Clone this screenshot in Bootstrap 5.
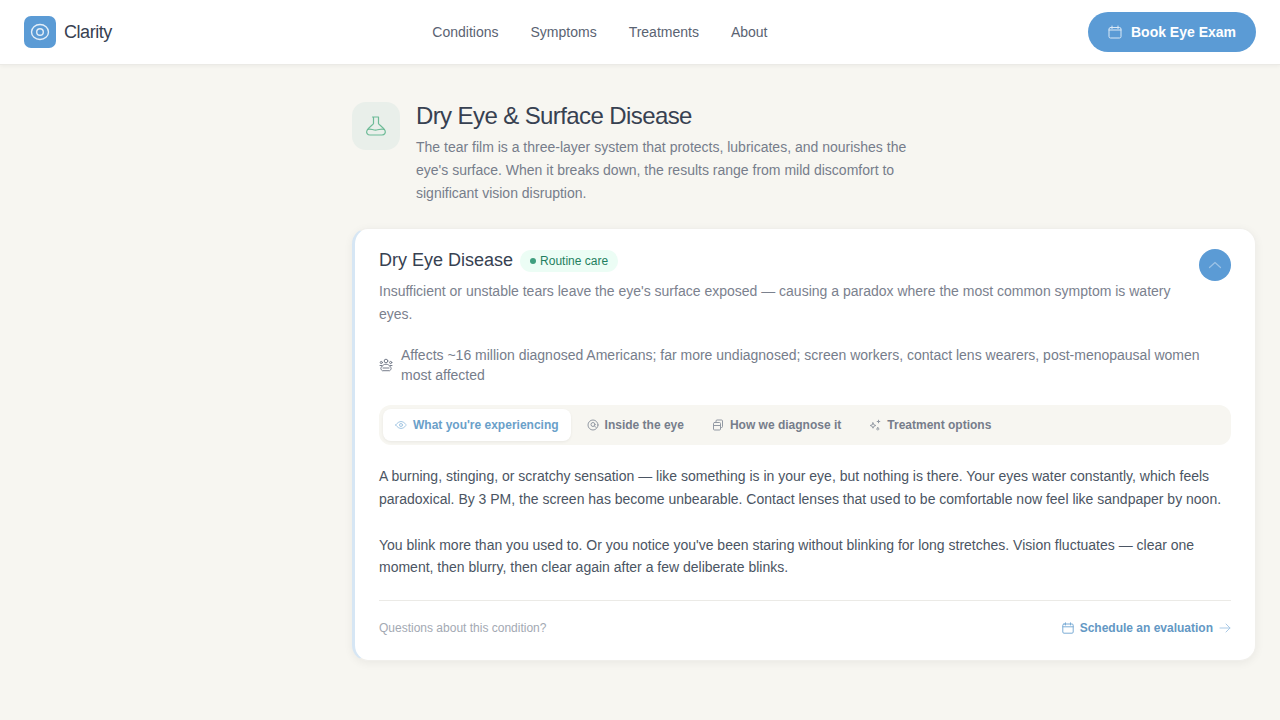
<!DOCTYPE html>
<html lang="en">
<head>
  <meta charset="UTF-8" />
  <meta name="viewport" content="width=device-width, initial-scale=1.0"/>
  <title>Clarity</title>
  <link href="https://cdn.jsdelivr.net/npm/bootstrap@5.3.0/dist/css/bootstrap.min.css" rel="stylesheet"/>
  <style>
    html, body { height: 100%; }
    body { background: #f7f6f1; font-family: "Liberation Sans", Arial, sans-serif; color: #4b5563; overflow: hidden; }
    svg { display: block; flex: none; fill: none; stroke: currentColor; stroke-linecap: round; stroke-linejoin: round; }

    .top-bar { height: 65px; background: #fff; border-bottom: 1px solid #ebeae6; box-shadow: 0 1px 4px rgba(0,0,0,.05); padding: 0 24px; }
    .logo-box { width: 32px; height: 32px; border-radius: 7px; background: #5b9bd5; color: #e3eef8; }
    .logo-name { font-size: 18px; letter-spacing: -.45px; color: #374151; }
    .main-links { gap: 32px; margin-left: 320.5px; }
    .main-links a { font-size: 14px; color: #5a6372; text-decoration: none; }
    .book-btn { width: 168px; height: 40px; border-radius: 20px; border: 0; background: #5b9bd5; color: #fff; font-size: 14px; font-weight: 700; gap: 9px; }
    .book-btn svg { color: #dbe9f6; }

    .page-col { margin-left: 352px; width: 904px; }
    .head-row { padding-top: 37px; gap: 16px; }
    .head-icon { width: 48px; height: 48px; border-radius: 14px; background: #e9efea; color: #6dbb97; }
    .head-title { font-size: 24px; line-height: 28px; font-weight: 400; letter-spacing: -.6px; color: #374151; margin: 0 0 6px; }
    .head-text { font-size: 14px; line-height: 22.75px; color: #767d8b; width: 512px; margin: 0; }

    .cond-card { margin-top: 24px; height: 432.75px; background: #fff; border-radius: 16px; border: 1px solid #f0efeb; border-left: 3px solid #d6e6f4; box-shadow: 0 2px 10px rgba(0,0,0,.06); padding: 20px 24px 0; }
    .cond-title { font-size: 18px; line-height: 22px; font-weight: 400; color: #374151; margin: 0; }
    .care-pill { height: 22px; margin: 1px 0 0 7px; padding: 0 10px; border-radius: 11px; background: #ecfdf5; color: #1f7f5f; font-size: 12px; gap: 4px; }
    .care-dot { width: 6px; height: 6px; border-radius: 50%; background: #3f9f7f; }
    .cond-sub { font-size: 14px; line-height: 22.75px; color: #7b818e; margin: 7.75px 0 0; width: 800px; }
    .toggle-btn { width: 32px; height: 32px; border-radius: 50%; background: #5b9bd5; color: #9cc3e6; border: 0; padding: 0; }
    .who-row { margin-top: 19.25px; gap: 8px; font-size: 14px; line-height: 20px; color: #767d8b; }
    .tab-strip { margin-top: 20px; height: 40px; background: #f7f6f1; border-radius: 12px; padding: 4px; gap: 4px; }
    .tab-item { height: 32px; padding: 0 12px; border-radius: 8px; font-size: 12px; font-weight: 700; color: #767d8b; gap: 6px; }
    .tab-item svg { color: #9299a3; }
    .tab-item.is-on { background: #fff; color: #6aa0c9; box-shadow: 0 1px 3px rgba(0,0,0,.06); }
    .tab-item.is-on svg { color: #a5c8e4; }
    .body-copy { font-size: 14px; line-height: 22.75px; color: #4b5563; margin: 20px 0 0; }
    .body-copy + .body-copy { margin-top: 23.25px; }
    .foot-row { margin-top: 21px; padding-top: 18px; border-top: 1px solid #ebeae6; height: 57px; }
    .foot-q { font-size: 12px; color: #a3a9b3; }
    .foot-link { font-size: 12px; font-weight: 700; color: #6398c4; text-decoration: none; gap: 6px; }
    .foot-link svg { color: #7dadd6; }
    .foot-link svg.arrow-ic { color: #a9c9e6; }
  </style>
</head>
<body>
  <header class="top-bar d-flex align-items-center">
    <div class="d-flex align-items-center gap-2">
      <div class="logo-box d-flex align-items-center justify-content-center">
        <svg width="20" height="20" viewBox="0 0 20 20" stroke-width="1.4"><ellipse cx="10" cy="10" rx="8.500" ry="7.500"/><circle cx="10" cy="10" r="3.300"/></svg>
      </div>
      <span class="logo-name">Clarity</span>
    </div>
    <nav class="main-links d-flex">
      <a href="#">Conditions</a>
      <a href="#">Symptoms</a>
      <a href="#">Treatments</a>
      <a href="#">About</a>
    </nav>
    <button class="book-btn d-flex align-items-center justify-content-center ms-auto">
      <svg width="14" height="14" viewBox="0 0 14 14" stroke-width="1"><rect x="1" y="2.500" width="12" height="10.500" rx="1.500"/><path d="M1 5h12M4 1v2.500M10 1v2.500"/></svg>
      Book Eye Exam
    </button>
  </header>

  <main class="page-col">
    <section class="head-row d-flex">
      <div class="head-icon d-flex align-items-center justify-content-center">
        <svg width="24" height="24" viewBox="0 0 24 24" stroke-width="1.200"><path d="M8.500 3h6M9.500 3v6.500c0 1-4.500 3.500-6.500 7-1.200 2.200.5 4.500 3 4.500h12c2.500 0 4-2.300 3-4.500-2-3.500-6.500-6-6.500-7V3"/><path d="M3.500 15.500c3-1.500 5.500 1 9 .5s5-1.500 8-.5"/></svg>
      </div>
      <div>
        <h1 class="head-title">Dry Eye &amp; Surface Disease</h1>
        <p class="head-text">The tear film is a three-layer system that protects, lubricates, and nourishes the eye's surface. When it breaks down, the results range from mild discomfort to significant vision disruption.</p>
      </div>
    </section>

    <section class="cond-card">
      <div class="d-flex justify-content-between align-items-start">
        <div>
          <div class="d-flex align-items-start">
            <h2 class="cond-title">Dry Eye Disease</h2>
            <span class="care-pill d-inline-flex align-items-center"><span class="care-dot"></span>Routine care</span>
          </div>
          <p class="cond-sub">Insufficient or unstable tears leave the eye's surface exposed — causing a paradox where the most common symptom is watery eyes.</p>
        </div>
        <button class="toggle-btn d-flex align-items-center justify-content-center">
          <svg width="14" height="14" viewBox="0 0 14 14" stroke-width="1.200"><path d="M1.500 9.500 7 4.500l5.500 5"/></svg>
        </button>
      </div>

      <div class="who-row d-flex align-items-center">
        <svg width="14" height="14" viewBox="0 0 14 14" stroke-width="1"><circle cx="7" cy="3" r="1.800"/><circle cx="2.300" cy="4.500" r="1.100"/><circle cx="11.700" cy="4.500" r="1.100"/><path d="M3 12.500c-1.500-1-1.500-2.500-.5-3.500 1-1.500 2.500-2.800 4.500-2.800s3.500 1.300 4.500 2.800c1 1 1 2.500-.5 3.500z"/><path d="M1 7.500h2M11 7.500h2M4 10h6"/></svg>
        <span>Affects ~16 million diagnosed Americans; far more undiagnosed; screen workers, contact lens wearers, post-menopausal women most affected</span>
      </div>

      <div class="tab-strip d-flex">
        <div class="tab-item is-on d-flex align-items-center">
          <svg width="12" height="12" viewBox="0 0 12 12"><path d="M.8 6S2.800 2.500 6 2.500 11.200 6 11.200 6 9.200 9.500 6 9.500.8 6 .8 6z"/><circle cx="6" cy="6" r="1.500"/></svg>
          What you're experiencing
        </div>
        <div class="tab-item d-flex align-items-center">
          <svg width="12" height="12" viewBox="0 0 12 12"><circle cx="6" cy="6" r="5"/><circle cx="6" cy="5.500" r="2"/><path d="M7.500 7 9 8.500"/></svg>
          Inside the eye
        </div>
        <div class="tab-item d-flex align-items-center">
          <svg width="12" height="12" viewBox="0 0 12 12"><rect x="1.500" y="3.500" width="7" height="7.500" rx="1"/><path d="M4 3.500V2a1 1 0 0 1 1-1h4.500a1 1 0 0 1 1 1v5.500a1 1 0 0 1-1 1H8.500M1.500 6.500h7"/></svg>
          How we diagnose it
        </div>
        <div class="tab-item d-flex align-items-center">
          <svg width="12" height="12" viewBox="0 0 12 12"><path d="M4 3.800 4.800 5.700 6.800 6.500 4.800 7.300 4 9.200 3.200 7.300 1.200 6.500 3.200 5.700z"/><path d="M9.500 1.200v2.600M8.200 2.500h2.600M8.800 8.800a1.100 1.100 0 1 0 .01 0z"/></svg>
          Treatment options
        </div>
      </div>

      <p class="body-copy">A burning, stinging, or scratchy sensation — like something is in your eye, but nothing is there. Your eyes water constantly, which feels paradoxical. By 3 PM, the screen has become unbearable. Contact lenses that used to be comfortable now feel like sandpaper by noon.</p>
      <p class="body-copy">You blink more than you used to. Or you notice you've been staring without blinking for long stretches. Vision fluctuates — clear one moment, then blurry, then clear again after a few deliberate blinks.</p>

      <div class="foot-row d-flex justify-content-between align-items-start">
        <span class="foot-q">Questions about this condition?</span>
        <a class="foot-link d-flex align-items-center" href="#">
          <svg width="12" height="12" viewBox="0 0 12 12"><rect x=".8" y="2" width="10.400" height="9.200" rx="1.200"/><path d="M.8 4.800h10.400M3.500 .8V3M8.500 .8V3"/></svg>
          Schedule an evaluation
          <svg class="arrow-ic" width="12" height="12" viewBox="0 0 12 12"><path d="M1 6h10M7 2l4 4-4 4"/></svg>
        </a>
      </div>
    </section>
  </main>
</body>
</html>
